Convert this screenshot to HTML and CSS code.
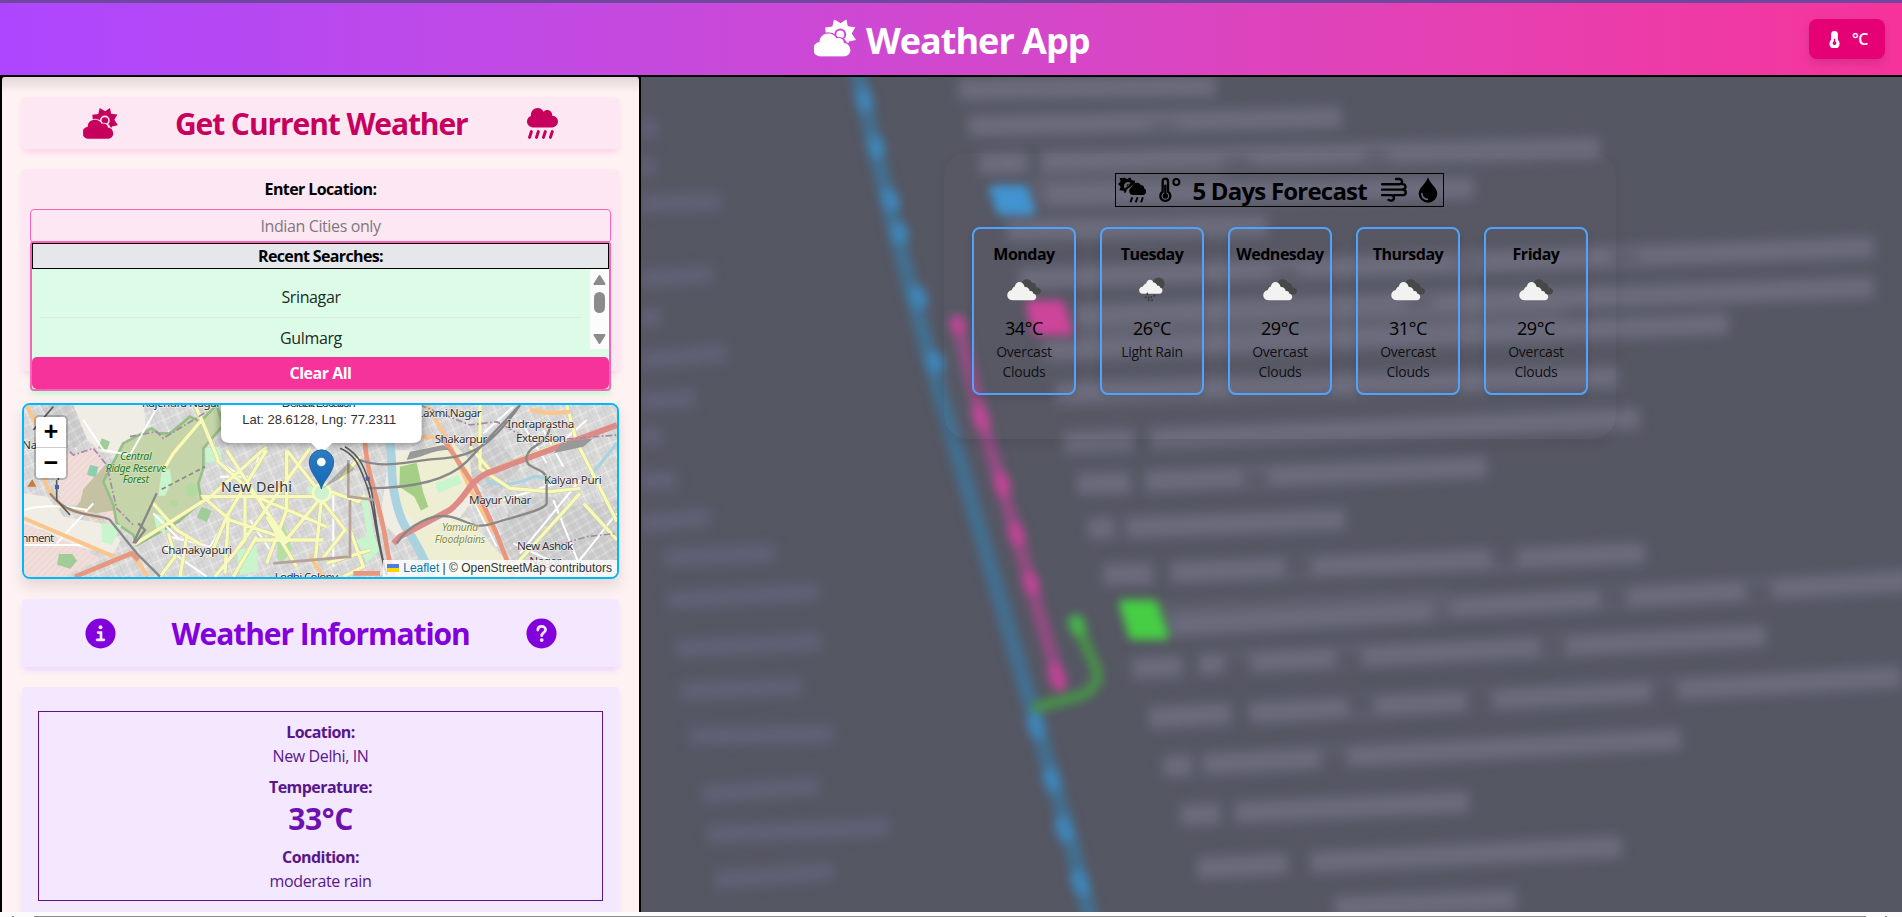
FILE: index.html
```
<!DOCTYPE html>
<html lang="en">
<head>
<meta charset="utf-8">
<title>Weather App</title>
<link rel="stylesheet" href="styles.css">
</head>
<body>
<svg class="defs" width="0" height="0" aria-hidden="true">
  <defs>
    <mask id="sunGap" maskUnits="userSpaceOnUse" x="0" y="0" width="130" height="116">
      <rect width="130" height="116" fill="#fff"/>
      <circle cx="80" cy="46" r="18" fill="#000"/>
      <circle cx="80" cy="46" r="12" fill="#fff"/>
      <path d="M22 113a22 22 0 0 1-7-42c2-18 18-28 33-26 10 1 18 7 22 15 12-4 24 4 26 14 22 4 20 38-4 39z" fill="#000" stroke="#000" stroke-width="10"/>
    </mask>
    <symbol id="cloudSun" viewBox="0 0 128 114">
      <path mask="url(#sunGap)" d="M99 0l4 21 23 3-11 19 13 20-22 5-2 21-20-12-20 10-4-21-24-3 0-18-2-20 22-3 5-22 20 12z"/>
      <path d="M22 113a22 22 0 0 1-5-44c0-18 14-27 29-26 10 1 18 7 22 15 12-4 24 4 23 14 26 3 27 41-1 41z"/>
    </symbol>
    <symbol id="rain" viewBox="0 0 512 512">
      <path d="M416 128c-.6 0-1.100.2-1.600.2 1.100-5.200 1.600-10.600 1.600-16.200 0-44.200-35.800-80-80-80-24.600 0-46.300 11.300-61 28.800C256.400 24.800 219.300 0 176 0 114.100 0 64 50.100 64 112c0 7.300.8 14.300 2.100 21.200C27.800 145.800 0 181.500 0 224c0 53 43 96 96 96h320c53 0 96-43 96-96s-43-96-96-96z"/>
      <path d="M72 390L42 485M187 390l-30 95M302 390l-30 95M417 390l-30 95" fill="none" stroke="currentColor" stroke-width="50" stroke-linecap="round"/>
    </symbol>
    <symbol id="cloudRain" viewBox="0 0 84 76">
      <path fill-rule="evenodd" d="M18 0l9 6 10-6 4 9 10 1-1 9a17 17 0 0 0-12 10c-7 2-13 7-14 16l-4 3-3-8-13-1 4-11-8-8 8-7-3-11 11 0zM29 14a12 12 0 0 0-8 20c2-4 5-6 10-7 1-5 4-8 8-10-3-2-7-3-10-3zM26 25a6 6 0 0 1 6-6l-2 6z"/>
      <path d="M45 53a12 12 0 0 1-4-23c2-14 21-19 28-6 7-1 10 4 9 9 10 4 7 20-3 20z"/>
      <path d="M42 62l-4 11M58 62l-4 11M74 62l-4 11" fill="none" stroke="currentColor" stroke-width="6" stroke-linecap="round"/>
    </symbol>
    <symbol id="clouds" viewBox="0 0 100 64">
      <path fill="#484848" d="M42 17C44-4 68-4 73 11c8-2 14 5 13 13 17 1 19 20 2 21H60z"/>
      <path fill="#f2f2f1" d="M16 62C-4 61-4 35 14 32c3-8 7-9 9-10C27 3 48 5 52 23c8-1 14 4 15 13 5-3 10 1 10 6 14 3 10 20-1 20z"/>
    </symbol>
    <symbol id="lightRain" viewBox="0 0 78 74">
      <circle cx="59" cy="19" r="18" fill="#484848"/>
      <path fill="#f2f2f1" d="M12 50C-4 49-3 29 12 28c3-7 7-8 9-8C25 4 40 5 43 16c7 0 11 5 11 10 5-3 9 1 9 5 11 2 9 18-2 19z"/>
      <path stroke="#2f3135" stroke-width="4" d="M26 53l-2-6M21 58l-2 5M30 59l-2 5M38 57l-2 5M47 53l-2 5M30 67l-2 5M40 66l-2 6"/>
    </symbol>
  </defs>
</svg>

<header class="topbar">
  <h1 class="brand"><svg class="brand-icon" viewBox="0 0 128 114"><use href="#cloudSun"/></svg><span>Weather App</span></h1>
  <button class="unit">
    <svg class="unit-icon" viewBox="0 0 30 50"><path fill-rule="evenodd" d="M5 10a10 10 0 0 1 20 0v16a15 15 0 1 1-20 0zm8 13v8a5 5 0 1 0 4 0v-8z"/></svg>
    <span>°C</span>
  </button>
</header>

<main class="layout">
  <aside class="sidebar">
    <section class="card title-card pink">
      <svg class="head-icon sun" viewBox="0 0 128 114"><use href="#cloudSun"/></svg>
      <h2 class="get">Get Current Weather</h2>
      <svg class="head-icon" viewBox="0 0 512 512"><use href="#rain"/></svg>
    </section>

    <section class="card search-card">
      <label class="label">Enter Location:</label>
      <div class="field"><span>Indian Cities only</span>
        <div class="dropdown">
          <div class="recent">Recent Searches:</div>
          <div class="results">
            <ul class="cities"><li>Srinagar</li><li>Gulmarg</li></ul>
            <svg class="scroll" viewBox="0 0 19 80"><rect width="19" height="80" fill="#fcfcfc"/><path d="M9.500 7l5 8h-10zM9.500 74l5-8h-10z" fill="#8b8b8b" stroke="#8b8b8b" stroke-width="2" stroke-linejoin="round"/><rect x="4" y="23" width="11" height="21" rx="5.500" fill="#8b8b8b"/></svg>
          </div>
          <button class="clear">Clear All</button>
        </div>
      </div>
    </section>

    <section class="map">
      <svg class="map-canvas" viewBox="12 15 1779 516" preserveAspectRatio="none">
        <defs>
          <pattern id="blocks" width="46" height="38" patternUnits="userSpaceOnUse" patternTransform="rotate(-24)">
            <path d="M0 2H46M2 0V38" stroke="#ededeb" stroke-width="3"/><path d="M0 20H30M25 0V38M12 20V38M36 2V20" stroke="#c8c7c7" stroke-width="2"/>
          </pattern>
          <pattern id="dense" width="30" height="26" patternUnits="userSpaceOnUse" patternTransform="rotate(-30)">
            <rect width="30" height="26" fill="#cfcecf"/><path d="M0 2H30M2 0V26" stroke="#e4e4e4" stroke-width="2"/><path d="M0 10H30M0 18H30M15 0V26" stroke="#bdbcbc" stroke-width="1.500"/>
          </pattern>
          <pattern id="hatch" width="14" height="14" patternUnits="userSpaceOnUse" patternTransform="rotate(45)">
            <rect width="14" height="14" fill="#f0dcd8"/><path d="M0 0V14" stroke="#efc4bf" stroke-width="2"/>
          </pattern>
          <linearGradient id="pin" x2="0" y2="1"><stop stop-color="#2e7cc0"/><stop offset="1" stop-color="#1268b8"/></linearGradient>
          <filter id="soft" x="-20%" y="-20%" width="140%" height="150%"><feGaussianBlur stdDeviation="12"/></filter>
          <path id="roads" d="M545 60L460 160l-30 50M545 60l-20-45M545 60l50 120M395 305l75 85 75 45M345 432L555 300 550 290h370M590 180l120 110 90 130M740 140L560 300M620 150l180 280M740 150l-120 200-50 120M870 145L650 450M800 150v180l-60 160M560 300l70 60 180 60M625 350l-10 170M675 290v130l-90 110M710 290l210 90M910 290L800 150M905 290L790 430M905 290l-20 200M700 420h210M740 350l90 150M960 240l60-70M905 265l110 40 20-20M905 300l70 90-70 90M990 390l40 110-60 30M640 530l70-120M445 400l20 70-45 60M500 410l-20 120M920 490l130-40M1380 15l0 190 90 60 120 10 90-10M1350 140l60 70M1680 280l-180 200-30 50M1640 15l30 110 121 240M1691 310l100 110M1405 215l165-65 80-30"/>
        </defs>
        <rect x="12" y="15" width="1779" height="516" fill="#d9d8d8"/>
        <rect x="12" y="15" width="1779" height="516" fill="url(#blocks)"/>
        <path fill="#f0ede5" d="M12 280l70 10 50 60 110 20 60 50-20 40-120-20-90-50-60-10zM150 15h220l10 90-80 60-60-10-70-70zM1110 150h290l-20 120-80 110-160 40-60-60z"/>
        <path fill="url(#dense)" d="M60 15h100l40 100-50 40-60-90zM1290 150l120-50 90 100-70 90-90-60zM1480 290l120 0 90 90-60 120-130 30-60-120zM1640 320l151-20v230h-150z"/>
        <path fill="url(#hatch)" d="M110 150l50 15 60-25 40 55-90 120-50 0zM12 370l140 60 90 45-110 55H12zM210 300l90-10 20 60-50 30z"/>
        <path fill="#c4c2a2" d="M260 190l10 50 20 90-60 10-68-12 20-25 8-35z"/>
        <path fill="#c5d5a9" stroke="#96bf87" stroke-width="8" d="M310 130l85-45 20 15 35 0 60-50 30 15 50-50 20 60-60 70 0 60-15 45 10 55-70 60-125 70-10-30-50-35-10-55-30-70z"/>
        <path fill="#c9f5cd" d="M425 212l25-5 5 40-20 40-20 0z"/>
        <g fill="#b2d9a0"><ellipse cx="515" cy="270" rx="17" ry="22"/><circle cx="463" cy="310" r="11"/></g>
        <path fill="#a0cd97" d="M245 115l25 10-10 28-26-8zM117 462l40 0 14 20-20 24-40-12zM545 320l30 12-15 35-30-15z"/>
        <path fill="#c9f5cd" d="M555 145l45-5 5 40-45 10zM245 370l60 5-30 60-30-10zM650 450l60-10 5 75-55 10zM1010 420l50-20 20 50-40 40zM860 260l70-5 10 30-70 5zM400 340l35 10 0 50-25-10zM1020 280l20 10 30 150-20 10z"/>
        <path fill="#b5dfa4" d="M775 385l18-8 25 70-35 45-12-20z"/>
        <path fill="#eeeed2" d="M1140 170l150-50 60 60 10 100-50 40-110 60-60-60-20-90zM1160 400l180-50 90 100 80 80h-270z"/>
        <path fill="#a5cf86" d="M1140 200l50-12 20 90 15 42-22 12-20-42-45-30z"/>
        <path fill="#c9f5cd" d="M1245 250l70-25 10 25-70 30z"/>
        <path fill="none" stroke="#aad3df" stroke-width="26" d="M1110 15c-10 60 5 120 5 180s15 150 50 200 50 90 70 136"/>
        <path fill="none" stroke="#aad3df" stroke-width="10" d="M1400 240c30 20 90 15 130-5s50 20 80 10M1701 240l90-110"/>
        <path fill="none" stroke="#fff" stroke-width="6" d="M12 330c60-20 130-10 190 0M12 435h180M110 430L220 310M190 60l60 90 80 15 80-140M400 340l80 80M450 410l120 30 60-100M600 230h100l20-80M590 180l60 40M430 440l130 90M690 360l60 90M940 270v230M1360 300l70 140M1450 300l190-60M1500 460l180-220M1600 300l80 200M1640 530l150-190M1480 430l130 60M1570 90l60 110M1500 60l80 130M1700 60l-90 80M1390 100l90-80"/>
        <use href="#roads" fill="none" stroke="#d3cc85" stroke-width="13"/>
        <use href="#roads" fill="none" stroke="#f7fabf" stroke-width="10"/>
        <path fill="none" stroke="#fbc58b" stroke-width="12" d="M12 355l270 115M20 15c35 70 60 110 55 170s0 90 60 140l110 30M1220 15l60 100 80 170 60 110M1100 112h180M1530 30l60 10 60-5M870 470l40 60M335 460l50 70"/>
        <g fill="none" stroke="#e9967f" stroke-width="14"><path d="M165 530l170-70 20 20M1035 110c0 100 40 180 60 300s20 90 25 120M1265 110l100 150 60 130 55 140M1000 520h80"/><path d="M1120 430l20-20 150-80c60-50 50-80 110-110l391-145" stroke="#de8b88" stroke-width="18"/></g>
        <g fill="none" stroke="#888" stroke-width="7"><path d="M1020 180c80 30 150 0 250-5s160-60 230-160M1040 265c120 0 240-20 300-80l160-170M1130 430c40-60 110-90 160-80s70 40 130 20 160-40 160-60v-70c0-40-70-30-60-70s60-30 70-90M90 280c60 80 160 60 180 80l80 100 70 70"/><path d="M345 430l30-40-20-20M410 280l-70 150"/></g>
        <path fill="none" stroke="#5b5b5b" stroke-width="5" d="M960 145c50 20 60 60 80 110s30 180 60 270M975 140c50 30 60 70 75 115s20 180 52 270M110 240v60l40 45M100 20l-60 70M115 130v110"/>
        <path fill="none" stroke="#a28aa7" stroke-width="5" stroke-dasharray="20 7 5 7" d="M150 155l10 10 60-20 40 50 30 130 50 50M330 110l80-15 20 20 130-80M1200 15l150 60 80-10 110 60 251-20M1600 440l100-30 90-10"/>
        <path d="M425 268l130-68" fill="none" stroke="#87858e" stroke-width="5" stroke-dasharray="14 9"/>
        <path d="M985 180v110l80 10M760 490l230-20V300" fill="none" stroke="#b6a19b" stroke-width="8"/>
        <circle cx="905" cy="278" r="26" fill="#cef1d0" stroke="#f7fabf" stroke-width="8"/>
        <path d="M1160 180c60-10 70-30 130-30l-20-15-100 20zM1600 160l30-35 90-10-30 25z" fill="#999"/>
        <path d="M210 195l25 5-8 32-26-8z" fill="#8dcdb0"/>
        <g class="labels">
          <text x="365" y="21" textLength="238">Rajendra Nagar</text><text x="6" y="146">Na</text><text x="4" y="427" textLength="99">nment</text><text x="424" y="462" textLength="212">Chanakyapuri</text><text x="764" y="542" textLength="190">Lodhi Colony</text>
          <text class="city" x="603" y="276" textLength="213">New Delhi</text>
          <text x="1192" y="52" textLength="193">Laxmi Nagar</text><text x="1244" y="130" textLength="158">Shakarpur</text><text x="1462" y="84" textLength="201">Indraprastha</text><text x="1488" y="127" textLength="150">Extension</text><text x="1572" y="251" textLength="173">Kalyan Puri</text><text x="1347" y="311" textLength="187">Mayur Vihar</text><text x="1491" y="451" textLength="169">New Ashok</text><text x="1528" y="494" textLength="96">Nagar</text>
          <g class="forest"><text x="300" y="180" textLength="95">Central</text><text x="257" y="215" textLength="182">Ridge Reserve</text><text x="308" y="250" textLength="79">Forest</text></g>
          <g class="plain"><text x="1266" y="394" textLength="108">Yamuna</text><text x="1244" y="429" textLength="152">Floodplains</text></g>
        </g>
        <path d="M37 238l12 22H22z" fill="#c77a3a"/><path d="M105 255h12v12h-12zM1037 230h12v12h-12z" fill="#4b5fa8"/>
        <path d="M603 15h602v115H603z" fill="#000" opacity=".45" filter="url(#soft)"/>
        <path d="M905 268l80-80 20 20z" fill="#000" opacity=".2"/>
        <path d="M603 15v90q0 24 28 24h242l32 30 32-30h240q28 0 28-24V15z" fill="#fff"/>
        <path d="M904 267c-4-24-36-48-36-81a36.500 36.500 0 0 1 73 0c0 33-33 57-37 81z" fill="url(#pin)" stroke="#2569a0" stroke-width="3"/><circle cx="904" cy="186" r="13" fill="#fff"/>
        <text class="popup-text" x="785" y="21" textLength="222">Default Location</text>
        <text class="popup-text" x="667" y="73" textLength="462">Lat: 28.6128, Lng: 77.2311</text>
      </svg>
      <div class="zoom"><span>+</span><span>−</span></div>
      <div class="credit"><i class="flag"></i><b>Leaflet</b> | © OpenStreetMap contributors</div>
    </section>

    <section class="card title-card purple">
      <svg class="head-icon" viewBox="0 0 32 32"><circle cx="16" cy="16" r="15.500"/><circle cx="16" cy="9.500" r="2" fill="#f3e8ff"/><path d="M13.500 15h3v7M12.500 22.500h7" fill="none" stroke="#f3e8ff" stroke-width="2.800" stroke-linecap="round"/></svg>
      <h2 class="info-title">Weather Information</h2>
      <svg class="head-icon" viewBox="0 0 32 32"><circle cx="16" cy="16" r="15.500"/><path d="M12.200 12.500c0-5 8-5 8-.3 0 2.800-4 2.900-4 6" fill="none" stroke="#f3e8ff" stroke-width="2.800" stroke-linecap="round"/><circle cx="16.200" cy="22.800" r="2" fill="#f3e8ff"/></svg>
    </section>

    <section class="card info-card">
      <dl class="info">
        <dt>Location:</dt><dd>New Delhi, IN</dd>
        <dt>Temperature:</dt><dd class="temp">33°C</dd>
        <dt>Condition:</dt><dd>moderate rain</dd>
      </dl>
    </section>
  </aside>

  <section class="stage">
    <svg class="backdrop" viewBox="528.4 63.5 1039.600 688.400" preserveAspectRatio="none">
      <defs>
        <filter id="b1" color-interpolation-filters="sRGB" filterUnits="userSpaceOnUse" x="480" y="20" width="1140" height="780"><feGaussianBlur stdDeviation="5"/></filter>
        <filter id="b2" color-interpolation-filters="sRGB" filterUnits="userSpaceOnUse" x="480" y="20" width="1140" height="780"><feGaussianBlur stdDeviation="4"/></filter>
      </defs>
      <g filter="url(#b1)" fill="none">
        <path stroke="#5f606d" stroke-width="26" d="M955 511l240-13M850 158l160-3M890 270l400-8"/>
        <path stroke="#6b6b7c" stroke-width="18" d="M790 74l212-3M798 104l308-7M807 135l40-1M858 133l461-11M863 161l352-6M830 190l215-4M840 230l705-26M885 260l660-23M860 289l565-22M870 324l465-13M877 365l58-2M948 362l404-17M888 399l44-1M944 397l282-12M897 436l22-1M928 435l181-7M909 474l42-1M965 472l391-16M965 516l216-12M1196 501l379-22M933 551l42-2M988 548l468-24M947 592l68-4M1030 588l537-30M959 632l24-1M992 630l394-21M973 672l33-1M1018 670l193-9M987 716l75-4M1080 711l257-13M1100 748l150-6"/>
        <path stroke="#575865" stroke-width="22" d="M1020 130v6M1135 126v6M960 101v4M1210 213v6M1340 209v6M1060 222v6M1170 246v6M1020 540v16M1112 536v14M1280 526v14M1122 575v14M1220 570v16M1372 562v16M1035 389v10M1070 460v14M1240 452v14M1330 486v14M1450 480v14M1100 618v16"/>
        <path stroke="#606176" stroke-width="15" d="M528 106h14M528 137h12M528 168l66-2M528 230l59-4M528 262h17M528 297l71-6M528 331l45-3M528 360h18M528 396h30M528 432l57-6M548 460l91-4M550 495l125-7M557 535l120-6M561 570l100-4M569 607l118-2M579 655l96-7M583 688l150-6M589 726l98-8"/>
      </g>
      <g filter="url(#b2)" fill="none" stroke-linecap="round">
        <path stroke="#436f90" stroke-width="13" d="M706 55C740 215 800 410 853 592c15 50 33 110 48 175"/>
        <path stroke="#3f84b6" stroke-width="14" d="M712 80l1 5M722 119l1 5M733 162l2 6M741 190l1 5M756 242l2 6M770 296l2 5M853 594l2 8M866 640l2 6M876 680l3 8M889 724l3 8"/>
        <path stroke="#944b83" stroke-width="11" d="M789 265l20 80 30 100 35 120"/>
        <path stroke="#c04495" stroke-width="13" d="M789 266l1 3M807 340l3 9M825 395l2 8M837 437l2 7M849 478l2 6M870 553l3 10"/>
        <path stroke="#489249" stroke-width="9" d="M888 515l15 35c5 12-3 22-18 25l-30 8"/><path stroke="#47b34b" stroke-width="13" d="M887 513l2 5"/>
        <g stroke-linejoin="round" stroke-width="7"><path fill="#4092d0" stroke="#4092d0" d="M819 156h25l6 18h-25z"/><path fill="#ce4299" stroke="#ce4299" d="M849 251h25l7 22h-26z"/><path fill="#46ce45" stroke="#46ce45" d="M926 498h25l9 26h-26z"/></g>
      </g>
    </svg>
    <div class="forecast">
      <h3 class="forecast-title">
        <svg width="28" height="26" viewBox="0 0 84 76"><use href="#cloudRain"/></svg>
        <svg width="24" height="26" viewBox="0 0 72 78"><path d="M17 13a8 8 0 0 1 16 0v31a15 15 0 1 1-16 0z" fill="none" stroke="#000" stroke-width="7"/><path d="M25 26v28" stroke="#000" stroke-width="7" stroke-linecap="round"/><circle cx="25" cy="57" r="8"/><circle cx="58" cy="15" r="9" fill="none" stroke="#000" stroke-width="6"/></svg>
        <span>5 Days Forecast</span>
        <svg width="26" height="26" viewBox="0 0 76 76"><path d="M3 21h49c14 0 12-16 0-15l-8 0M3 37h58c14 0 14-17 1-16M3 53h26c13 0 11 18-1 16l-6-2M38 53h24c14 0 14-16 0-16" fill="none" stroke="#000" stroke-width="7" stroke-linecap="round"/></svg>
        <svg width="20" height="26" viewBox="0 0 58 78"><path d="M29 1C35 20 57 33 57 50a28 27 0 0 1-56 0C1 33 23 20 29 1z"/><path d="M11 50c0 10 7 16 16 17" fill="none" stroke="#696979" stroke-width="5" stroke-linecap="round"/></svg>
      </h3>
      <div class="days">
        <article class="day"><h4>Monday</h4><svg class="wx" viewBox="0 0 100 64"><use href="#clouds"/></svg><p class="deg">34°C</p><p class="desc">Overcast<br>Clouds</p></article>
        <article class="day"><h4>Tuesday</h4><svg class="wx rainy" viewBox="0 0 78 74"><use href="#lightRain"/></svg><p class="deg">26°C</p><p class="desc">Light Rain</p></article>
        <article class="day"><h4>Wednesday</h4><svg class="wx" viewBox="0 0 100 64"><use href="#clouds"/></svg><p class="deg">29°C</p><p class="desc">Overcast<br>Clouds</p></article>
        <article class="day"><h4>Thursday</h4><svg class="wx" viewBox="0 0 100 64"><use href="#clouds"/></svg><p class="deg">31°C</p><p class="desc">Overcast<br>Clouds</p></article>
        <article class="day"><h4>Friday</h4><svg class="wx" viewBox="0 0 100 64"><use href="#clouds"/></svg><p class="deg">29°C</p><p class="desc">Overcast<br>Clouds</p></article>
      </div>
    </div>
  </section>
</main>
<footer class="hscroll"><i class="tip"></i><div class="thumb"></div><i class="tip"></i></footer>
</body>
</html>
```
FILE: styles.css
```
* { box-sizing: border-box; margin: 0; padding: 0; }
body { width: 1902px; height: 917px; overflow: hidden; background: #fcfcfc; font-family: "Open Sans", "Noto Sans", sans-serif; font-size: 16px; line-height: 24px; letter-spacing: -0.38px; color: #000; display: flex; flex-direction: column; }
svg { display: block; fill: currentColor; flex: none; }
.defs { position: absolute; }
button { border: 0; font: inherit; letter-spacing: inherit; color: #fff; }

.topbar { height: 77px; border-top: 3px solid #6f479f; border-bottom: 2px solid #000; background: linear-gradient(to right in oklab, #ad46ff, #f6339a); display: grid; grid-template-columns: 1fr auto 1fr; align-items: center; color: #fff; flex: none; }
.brand { grid-column: 2; display: flex; align-items: center; gap: 10px; font-size: 36px; line-height: 40px; font-weight: 700; letter-spacing: -1px; }
.brand span { width: 222px; white-space: nowrap; padding-top: 4px; }
.brand-icon { width: 42px; height: 38px; margin-top: -2px; }
.unit { justify-self: end; margin-right: 17px; width: 76px; height: 40px; border-radius: 8px; background: #e60076; display: flex; align-items: center; justify-content: center; gap: 12px; padding-left: 3px; font-weight: 600; font-size: 16px; box-shadow: 0 4px 8px rgba(0,0,0,.12); }
.unit-icon { width: 11px; height: 17px; }

.layout { height: 835px; display: flex; flex: none; background: #000; }
.sidebar { width: 641px; height: 835px; border: 1px solid #000; border-top: 0; border-bottom: 0; border-left-width: 2px; border-right-width: 2px; border-radius: 4px 4px 0 0; background: linear-gradient(rgba(80,60,60,.15), rgba(80,60,60,0) 16px), #fef2f2; padding: 20px 20px 0; display: flex; flex-direction: column; overflow: hidden; flex: none; }
.card { width: 597px; border-radius: 4px; flex: none; }
.title-card { display: flex; align-items: center; justify-content: center; }
.title-card h2 { font-size: 30px; line-height: 36px; font-weight: 700; white-space: nowrap; letter-spacing: -1.05px; padding-top: 2px; }
.pink { height: 52px; background: #fce7f3; color: #c6005c; box-shadow: 0 4px 6px -1px #fccee8; gap: 59px; }
.pink .get { width: 293px; margin-left: -2px; letter-spacing: -1.1px; }
.head-icon { width: 31px; height: 31px; }
.head-icon.sun { width: 35px; }

.search-card { height: 202px; margin-top: 20px; background: #fce7f3; box-shadow: 0 4px 6px -1px #fccee8; padding: 8px 8px; }
.label { display: block; text-align: center; font-weight: 700; letter-spacing: -0.6px; }
.field { position: relative; height: 34px; margin-top: 8px; border: 1px solid #fb64b6; border-radius: 4px; color: #7f7880; text-align: center; line-height: 32px; }
.dropdown { position: absolute; z-index: 2; left: -1px; right: -1px; top: 31px; height: 150px; border: 2px solid #fb64b6; border-radius: 4px; background: #dcfce7; box-shadow: 0 4px 6px -1px #b9f8cf; color: #000; display: flex; flex-direction: column; }
.recent { height: 26px; border: 1px solid #000; background: #e5e7eb; font-weight: 700; line-height: 25px; letter-spacing: -0.65px; }
.results { height: 88px; display: flex; }
.cities { flex: 1; list-style: none; padding: 7px 8px 0; color: #1c2b22; }
.cities li { height: 42px; line-height: 42px; border-bottom: 1px solid #e2e6e4; }
.cities li:last-child { border: 0; line-height: 41px; }
.scroll { width: 19px; height: 80px; }
.clear { height: 32px; border-radius: 5px; background: #f6339a; font-weight: 700; letter-spacing: -0.5px; padding-bottom: 1px; }

.map { position: relative; width: 597px; height: 176px; margin-top: 32px; border: 2px solid #00b8fb; border-radius: 8px; overflow: hidden; flex: none; letter-spacing: 0; box-shadow: 0 8px 14px rgba(90,60,60,.14); }
.map-canvas { width: 593px; height: 172px; }
.labels text { font-family: "Noto Sans", sans-serif; font-size: 35px; fill: #333; stroke: #fff; stroke-opacity: .6; stroke-width: 4px; paint-order: stroke; }
.labels .city { font-size: 43px; }
.labels .forest text { font-size: 32px; font-style: italic; fill: #1f7d22; stroke-opacity: .35; }
.labels .plain text { font-size: 31px; font-style: italic; fill: #808b38; }
.popup-text { font-family: "Liberation Sans", Arial, sans-serif; font-size: 39px; fill: #333; }
.zoom { position: absolute; left: 12px; top: 12px; width: 30px; height: 61px; border-radius: 3px; background: #fff; box-shadow: 0 0 0 2px rgba(0,0,0,.2); font: 700 25px/33px "Liberation Mono", monospace; text-align: center; display: flex; flex-direction: column; }
.zoom span { height: 30px; }
.zoom span + span { border-top: 1px solid #ccc; }
.credit { position: absolute; right: 0; bottom: 0; height: 17px; padding: 0 5px 0 4px; background: rgba(255,255,255,.8); font: 12px/16px "Liberation Sans", Arial, sans-serif; color: #333; white-space: nowrap; }
.credit b { font-weight: 400; color: #0078a8; }
.flag { display: inline-block; width: 12px; height: 8px; margin-right: 4px; background: linear-gradient(#4c7be1 50%, #ffd500 50%); }

.purple { height: 68px; margin-top: 20px; background: #f3e8ff; color: #8200db; box-shadow: 0 4px 6px -1px #e9d4ff; gap: 56px; }
.info-title { width: 298px; }
.info-card { height: 240px; margin-top: 20px; background: #f3e8ff; box-shadow: 0 4px 6px -1px #e9d4ff; padding: 24px 16px; }
.info { height: 190px; border: 1px solid #59168b; color: #59168b; text-align: center; padding-top: 8px; }
.info dt { font-weight: 700; letter-spacing: -0.55px; }
.info dd { margin-bottom: 7px; }
.info .temp { font-size: 30px; line-height: 38px; font-weight: 700; color: #6e11b0; padding-top: 1px; }

.stage { position: relative; flex: 1; background: #555763; overflow: hidden; }
.backdrop { position: absolute; inset: 0; width: 1261px; height: 835px; }
.forecast { position: relative; width: 672px; height: 286px; margin: 76px 0 0 303px; padding: 20px 28px; border-radius: 24px; background: rgba(255,255,255,.012); box-shadow: 0 5px 12px rgba(0,0,0,.07); display: flex; flex-direction: column; align-items: center; }
.forecast-title { width: 329px; height: 34px; margin-right: 1px; border: 1px solid #000; font-size: 24px; line-height: 34px; font-weight: 700; display: flex; align-items: center; justify-content: space-between; padding: 0 5px 0 2px; }
.forecast-title span { width: 177px; white-space: nowrap; padding-top: 2px; letter-spacing: -0.8px; }
.days { display: flex; gap: 24px; margin-top: 20px; }
.day { width: 104px; height: 168px; border: 2px solid #50a2ff; border-radius: 8px; box-shadow: 0 3px 6px rgba(0,0,0,.1); display: flex; flex-direction: column; align-items: center; text-align: center; padding-top: 13px; }
.day h4 { font-size: 16px; line-height: 24px; font-weight: 700; letter-spacing: -0.5px; }
.wx { width: 34px; height: 22px; margin: 13px 0 13px; }
.wx.rainy { width: 26px; height: 25px; margin: 11px 0 12px; }
.deg { font-size: 18px; line-height: 28px; }
.desc { font-size: 14px; line-height: 20px; color: #101014; letter-spacing: -0.25px; }

.hscroll { height: 5px; display: flex; align-items: flex-end; justify-content: space-between; padding: 0 15px 0 12px; flex: none; }
.thumb { width: 1832px; height: 1px; background: #8b8b8b; }
.tip { width: 2px; height: 1px; background: #8b8b8b; }
```
